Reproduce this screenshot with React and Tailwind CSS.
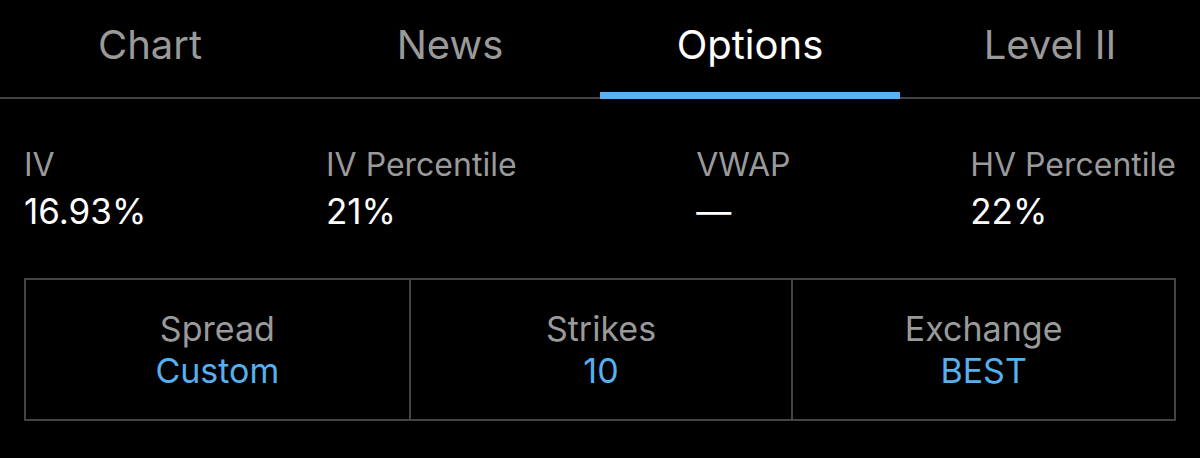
import React from 'react';

const tabs = ['Chart', 'News', 'Options', 'Level II'];

const stats = [
  { label: 'IV', value: '16.93%' },
  { label: 'IV Percentile', value: '21%' },
  { label: 'VWAP', value: '—' },
  { label: 'HV Percentile', value: '22%' },
];

const settings = [
  { label: 'Spread', value: 'Custom' },
  { label: 'Strikes', value: '10' },
  { label: 'Exchange', value: 'BEST' },
];

const App = () => {
  const active = 'Options';

  return (
    <div className="w-[1200px] h-[458px] bg-black overflow-hidden font-['Inter','Roboto',sans-serif]">
      {/* tab bar */}
      <div className="flex border-b-2 border-[#444444]">
        {tabs.map((tab) => (
          <div
            key={tab}
            className={`relative flex-1 h-[97px] pb-2 flex items-center justify-center text-[40px] ${
              tab === active ? 'text-white' : 'text-[#9a9a9a]'
            }`}
          >
            {tab}
            {tab === active && (
              <div className="absolute left-0 right-0 bottom-[-2px] h-[7px] bg-[#5ab2f2]" />
            )}
          </div>
        ))}
      </div>

      {/* volatility stats */}
      <div className="flex justify-between px-6 pt-[46px]">
        {stats.map((s) => (
          <div key={s.label} className="flex flex-col">
            <span className="text-[32px] leading-[40px] text-[#9a9a9a]">{s.label}</span>
            <span className="text-[35px] leading-[40px] mt-[6px] text-white">{s.value}</span>
          </div>
        ))}
      </div>

      {/* chain settings */}
      <div className="mx-6 mt-[47px] h-[143px] grid grid-cols-3 border-2 border-[#444444]">
        {settings.map((s, i) => (
          <div
            key={s.label}
            className={`flex flex-col items-center justify-center ${i > 0 ? 'border-l-2 border-[#444444]' : ''}`}
          >
            <span className="text-[34px] leading-[42px] text-[#9a9a9a]">{s.label}</span>
            <span className="text-[34px] leading-[42px] text-[#56b0f0]">{s.value}</span>
          </div>
        ))}
      </div>
    </div>
  );
};

export default App;
